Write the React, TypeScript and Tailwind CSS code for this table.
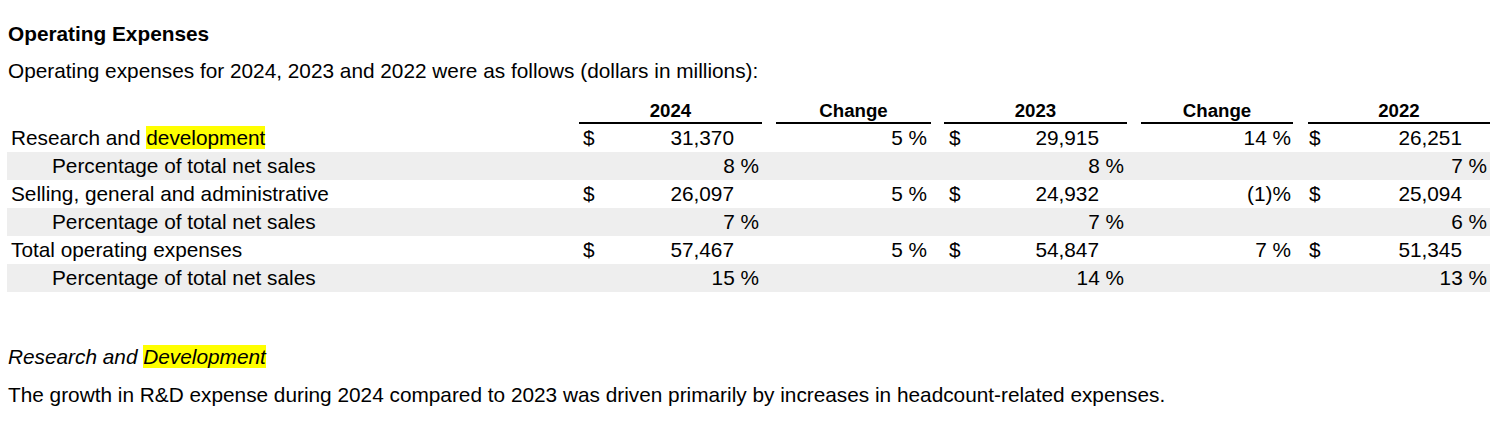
import React from "react";

type Row = {
  label: React.ReactNode;
  indent?: boolean;
  gray?: boolean;
  kind: "money" | "pct";
  v: string[]; // 2024, change, 2023, change, 2022
};

const rows: Row[] = [
  {
    label: (
      <>
        Research and <span className="bg-[#ffff00]">development</span>
      </>
    ),
    kind: "money",
    v: ["31,370", "5 %", "29,915", "14 %", "26,251"],
  },
  { label: "Percentage of total net sales", indent: true, gray: true, kind: "pct", v: ["8 %", "", "8 %", "", "7 %"] },
  { label: "Selling, general and administrative", kind: "money", v: ["26,097", "5 %", "24,932", "(1)%", "25,094"] },
  { label: "Percentage of total net sales", indent: true, gray: true, kind: "pct", v: ["7 %", "", "7 %", "", "6 %"] },
  { label: "Total operating expenses", kind: "money", v: ["57,467", "5 %", "54,847", "7 %", "51,345"] },
  { label: "Percentage of total net sales", indent: true, gray: true, kind: "pct", v: ["15 %", "", "14 %", "", "13 %"] },
];

function MoneyCell({ w, v, kind, dl }: { w: string; v: string; kind: "money" | "pct"; dl: string }) {
  if (kind === "money") {
    return (
      <div className={`${w} flex justify-between`}>
        <span className={dl}>$</span>
        <span className="pr-[28px]">{v}</span>
      </div>
    );
  }
  return <div className={`${w} text-right pr-[3px]`}>{v}</div>;
}

export default function App() {
  return (
    <div
      className="w-[1503px] h-[433px] bg-white text-black text-[20.8px] px-[8px] pt-[20px]"
      style={{ fontFamily: "'Liberation Sans', Arial, sans-serif" }}
    >
      <div className="h-[28px] leading-[28px] font-bold">Operating Expenses</div>
      <div className="mt-[9px] h-[28px] leading-[28px]">
        Operating expenses for 2024, 2023 and 2022 were as follows (dollars in millions):
      </div>

      <div className="mt-[15px] -ml-[1px] w-[1483px]">
        {/* header */}
        <div className="flex h-[24px] text-[18.67px] font-bold leading-[22px]">
          <div className="w-[572px]" />
          <div className="w-[183px] text-center border-b-2 border-black">2024</div>
          <div className="w-[14px]" />
          <div className="w-[155px] text-center border-b-2 border-black">Change</div>
          <div className="w-[13px]" />
          <div className="w-[183px] text-center border-b-2 border-black">2023</div>
          <div className="w-[14px]" />
          <div className="w-[152px] text-center border-b-2 border-black">Change</div>
          <div className="w-[15px]" />
          <div className="w-[182px] text-center border-b-2 border-black">2022</div>
        </div>

        {rows.map((r, i) => (
          <div key={i} className={`flex h-[28px] leading-[28px] ${r.gray ? "bg-[#eeeeee]" : ""}`}>
            <div className={`w-[572px] ${r.indent ? "pl-[45px]" : "pl-[4px]"}`}>{r.label}</div>
            <MoneyCell w="w-[183px]" v={r.v[0]} kind={r.kind} dl="pl-[4px]" />
            <div className="w-[14px]" />
            <div className="w-[155px] text-right pr-[4px]">{r.v[1]}</div>
            <div className="w-[13px]" />
            <MoneyCell w="w-[183px]" v={r.v[2]} kind={r.kind} dl="pl-[5px]" />
            <div className="w-[14px]" />
            <div className="w-[152px] text-right pr-[2px]">{r.v[3]}</div>
            <div className="w-[15px]" />
            <MoneyCell w="w-[182px]" v={r.v[4]} kind={r.kind} dl="pl-[1px]" />
          </div>
        ))}
      </div>

      <div className="mt-[51px] h-[28px] leading-[28px] italic">
        Research and <span className="bg-[#ffff00]">Development</span>
      </div>
      <div className="mt-[10px] h-[28px] leading-[28px]">
        The growth in R&amp;D expense during 2024 compared to 2023 was driven primarily by increases in
        headcount-related expenses.
      </div>
    </div>
  );
}
